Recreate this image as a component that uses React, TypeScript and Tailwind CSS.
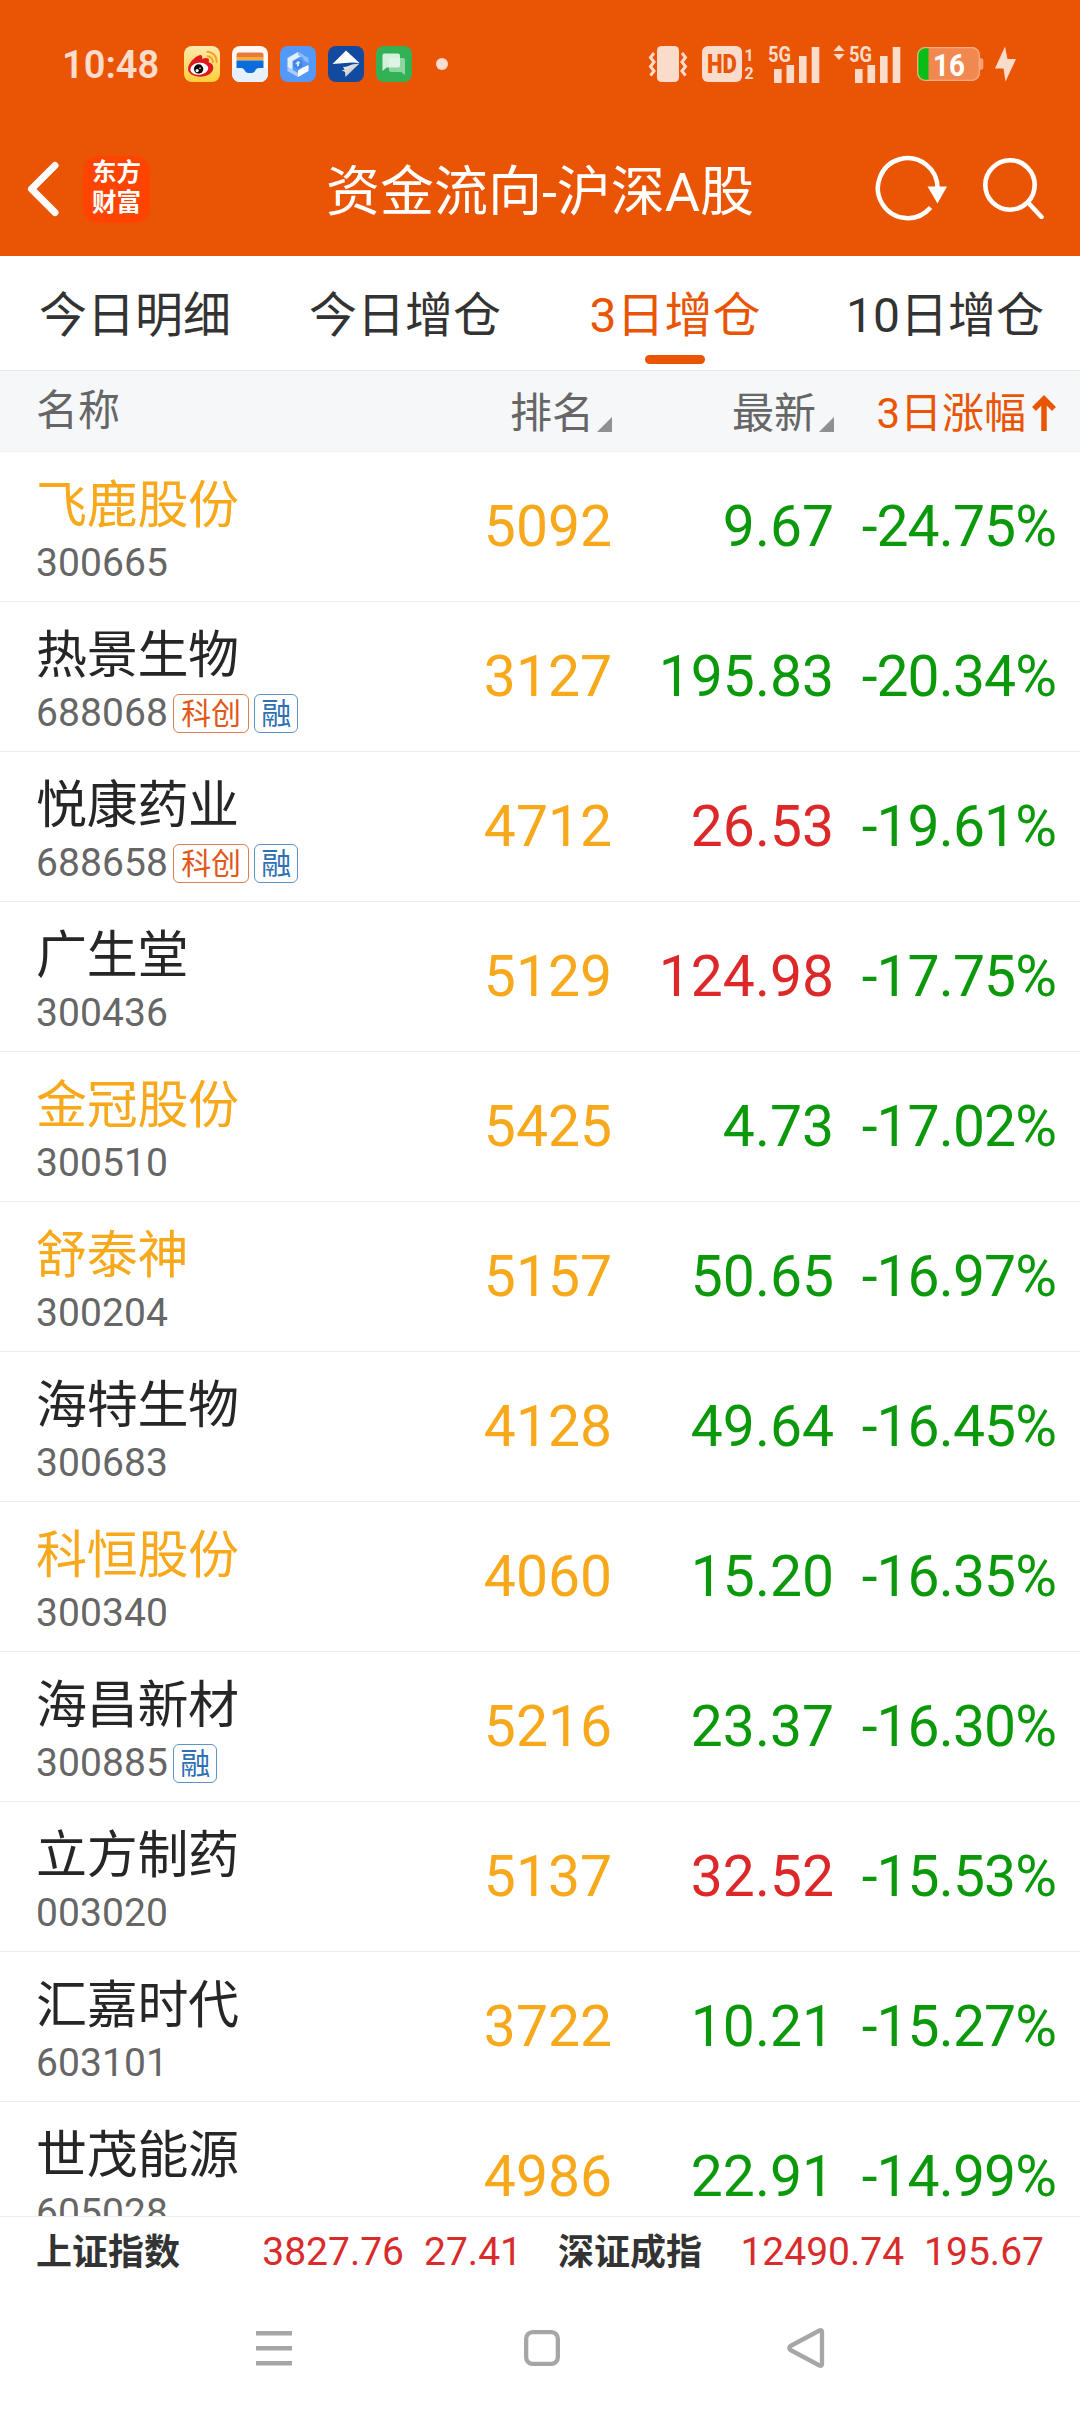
import type { ReactNode } from "react";

type Tag = "科创" | "融";

type Stock = {
  name: string;
  code: string;
  tags?: Tag[];
  held?: boolean;
  rank: string;
  price: string;
  up?: boolean;
  change: string;
};

const stocks: Stock[] = [
  { name: "飞鹿股份", code: "300665", held: true, rank: "5092", price: "9.67", change: "-24.75%" },
  { name: "热景生物", code: "688068", tags: ["科创", "融"], rank: "3127", price: "195.83", change: "-20.34%" },
  { name: "悦康药业", code: "688658", tags: ["科创", "融"], rank: "4712", price: "26.53", up: true, change: "-19.61%" },
  { name: "广生堂", code: "300436", rank: "5129", price: "124.98", up: true, change: "-17.75%" },
  { name: "金冠股份", code: "300510", held: true, rank: "5425", price: "4.73", change: "-17.02%" },
  { name: "舒泰神", code: "300204", held: true, rank: "5157", price: "50.65", change: "-16.97%" },
  { name: "海特生物", code: "300683", rank: "4128", price: "49.64", change: "-16.45%" },
  { name: "科恒股份", code: "300340", held: true, rank: "4060", price: "15.20", change: "-16.35%" },
  { name: "海昌新材", code: "300885", tags: ["融"], rank: "5216", price: "23.37", change: "-16.30%" },
  { name: "立方制药", code: "003020", rank: "5137", price: "32.52", up: true, change: "-15.53%" },
  { name: "汇嘉时代", code: "603101", rank: "3722", price: "10.21", change: "-15.27%" },
  { name: "世茂能源", code: "605028", rank: "4986", price: "22.91", change: "-14.99%" },
];

const tabs = ["今日明细", "今日增仓", "3日增仓", "10日增仓"];

function AppIcon({ children }: { children: ReactNode }) {
  return (
    <svg viewBox="0 0 36 36" className="h-9 w-9 shrink-0">
      {children}
    </svg>
  );
}

function NotificationIcons() {
  return (
    <div className="ml-[25px] flex items-center gap-3">
      <AppIcon>
        <defs>
          <linearGradient id="weibo" x1="0" y1="0" x2="0" y2="1">
            <stop offset="0" stopColor="#ffe9b0" />
            <stop offset="1" stopColor="#ffcf3a" />
          </linearGradient>
        </defs>
        <rect width="36" height="36" rx="8" fill="url(#weibo)" />
        <path
          d="M15.500 9.200c2-.6 3.300 1 2.700 3.800 3-1.700 7-1.500 6.800 1.200-.1 1-.5 1.700-.3 2.100 2.300.8 4.600 2.300 4.600 5.400 0 5.100-6 9-13 9S4 27.400 4 22.800C4 17.500 11 10.300 15.500 9.200z"
          fill="#e0191f"
        />
        <ellipse cx="15.300" cy="22.800" rx="9" ry="6" fill="#fff" transform="rotate(-6 15.300 22.800)" />
        <circle cx="14.600" cy="23" r="4.700" fill="#0b0b0b" />
        <circle cx="13.200" cy="24.600" r="1.600" fill="#fff" />
        <circle cx="16" cy="22.200" r=".8" fill="#fff" />
        <path d="M23.500 10.200a5.500 5.500 0 0 1 5.300 6M23.300 5.700a9.500 9.500 0 0 1 9.300 10.300" fill="none" stroke="#f3a320" strokeWidth="1.900" strokeLinecap="round" />
      </AppIcon>
      <AppIcon>
        <rect width="36" height="36" rx="8" fill="#fdf8f5" />
        <path d="M0 22h36v6a8 8 0 0 1-8 8H8a8 8 0 0 1-8-8z" fill="#e6f1fd" />
        <path d="M4.500 9a2.500 2.500 0 0 1 2.500-2.500h22A2.500 2.500 0 0 1 31.500 9v2.500h-27z" fill="#e9793f" />
        <path d="M4.500 11h27v3.500h-27z" fill="#f5ad36" />
        <path d="M4.500 14.500h27V22h-4.500c-2 0-3 1-3.700 2.400C22.300 26.300 21 27 18 27s-4.300-.7-5.300-2.600C12 23 11 22 9 22H4.500z" fill="#0d6cdc" />
      </AppIcon>
      <AppIcon>
        <rect width="36" height="36" rx="8" fill="#5499f8" />
        <path d="M18 6l5 3-10.500 6v9L7.500 21V12z" fill="#e4effe" />
        <path d="M7.500 21l10.500 6v4L7.500 25z" fill="#a9cdfd" />
        <path d="M18 27l10.500-6v4L18 31z" fill="#fff" />
        <path d="M23 21.500l5.500-2.500v3L18 28v-3.500z" fill="#fff" />
        <path d="M18 6l10.500 6v5l-5-3v-2L18 9z" fill="#8cbcfc" />
        <path d="M13.500 15.500L18 13l4.500 2.500v5L18 23l-4.500-2.500z" fill="#3f82e8" />
        <path d="M18 14.800l3 2.400h-2v2.600l-2 1v-2.600h-2z" fill="#d9e9fe" />
      </AppIcon>
      <AppIcon>
        <defs>
          <linearGradient id="blade" x1="0" y1="0" x2="1" y2="1">
            <stop offset="0" stopColor="#fff" />
            <stop offset="1" stopColor="#a6a9b2" />
          </linearGradient>
        </defs>
        <rect width="36" height="36" rx="8" fill="#114a9e" />
        <path d="M18 4.500L31.500 17 24 16.500 4.500 18z" fill="#fff" />
        <path d="M31.500 17.500L17.500 31l-.5-5-3.500-2h3.200L15 20.800c3 .4 5-.8 9-2.300z" fill="url(#blade)" />
      </AppIcon>
      <AppIcon>
        <rect width="36" height="36" rx="8" fill="#32b156" />
        <path d="M15 12h12a2 2 0 0 1 2 2v15l-4-3H15a2 2 0 0 1-2-2V14a2 2 0 0 1 2-2z" fill="#8dd6a0" />
        <path d="M8.500 7.500H22a2 2 0 0 1 2 2v10a2 2 0 0 1-2 2H10.500l-4 3.500V9.500a2 2 0 0 1 2-2z" fill="#eaf8ee" fillOpacity=".88" />
      </AppIcon>
    </div>
  );
}

function Signal() {
  return (
    <svg viewBox="0 0 53 38" className="h-[38px] w-[53px] overflow-visible" fill="#fbdccb" fontFamily="Roboto, sans-serif">
      <text x="0" y="17" fontSize="22" fontWeight="700" textLength="23" lengthAdjust="spacingAndGlyphs">
        5G
      </text>
      <path d="M6 24h7.600v14H6zM18.500 20h7.600v18h-7.600zM31 11h7.600v27H31zM43.700 2h7.600v36h-7.600z" />
    </svg>
  );
}

function StatusBar() {
  return (
    <div className="flex h-[128px] items-center pl-[62px] text-[#fbdccb]">
      <span className="pt-0.5 text-[38px] leading-none font-semibold">10:48</span>
      <NotificationIcons />
      <span className="ml-6 h-3 w-3 rounded-full bg-[#fbdccb]" />
      <svg viewBox="0 0 40 38" className="ml-[200px] h-[38px] w-10" fill="#fbdccb">
        <rect x="9" y="1" width="22" height="36" rx="4.500" />
        <path d="M6 8L2.500 12.500 6 17l-3.500 4.500L6 26l-3.500 4.500M34 8l3.500 4.500L34 17l3.500 4.500L34 26l3.500 4.500" fill="none" stroke="#fbdccb" strokeWidth="3" />
      </svg>
      <svg viewBox="0 0 54 38" className="ml-[14px] h-[38px] w-[54px]" fill="#fbdccb">
        <rect x="0" y="1" width="40" height="36" rx="6" />
        <text x="5" y="28" fontSize="25" fontWeight="900" fill="#e95504" textLength="30" lengthAdjust="spacingAndGlyphs">
          HD
        </text>
        <text x="42.500" y="16" fontSize="16" fontWeight="700">1</text>
        <text x="42.500" y="34" fontSize="16" fontWeight="700">2</text>
      </svg>
      <div className="ml-3">
        <Signal />
      </div>
      <svg viewBox="0 0 12 16" className="mb-[22px] ml-3 h-4 w-3" fill="#fbdccb">
        <path d="M6 0l5.500 6H.5zM6 15L.5 9h11z" />
      </svg>
      <div className="ml-1">
        <Signal />
      </div>
      <svg viewBox="0 0 67 36" className="ml-[15px] h-9 w-[67px]">
        <defs>
          <clipPath id="battery">
            <rect x="0" y="1" width="63" height="34" rx="8" />
          </clipPath>
        </defs>
        <rect x="0" y="1" width="63" height="34" rx="8" fill="#f18850" />
        <path d="M0 0h11.500v36H0z" fill="#08bd16" clipPath="url(#battery)" />
        <rect x=".7" y="1.700" width="61.600" height="32.600" rx="7.500" fill="none" stroke="#f6ad85" strokeWidth="1.300" />
        <path d="M63 12c2 0 3.300 1 3.300 2.500v7c0 1.500-1.300 2.500-3.300 2.500z" fill="#f5a277" />
        <text x="16" y="29.500" fontSize="31" fontWeight="700" fill="#fff" textLength="32" lengthAdjust="spacingAndGlyphs">
          16
        </text>
      </svg>
      <svg viewBox="0 0 21 36" className="ml-[11px] h-9 w-[21px]" fill="#fbdccb">
        <path d="M10 .5L0 22.500h8.500L10.500 35.500 21 13h-8.500z" />
      </svg>
    </div>
  );
}

function NavBar() {
  return (
    <div className="grid h-32 grid-cols-[1fr_auto_1fr] items-center">
      <div className="flex items-center pb-1.5">
        <svg viewBox="0 0 34 56" className="ml-[26px] h-14 w-[34px]">
          <path d="M29 4.500L5.500 28 29 51.500" fill="none" stroke="#fff" strokeWidth="7" strokeLinecap="round" strokeLinejoin="round" />
        </svg>
        <div className="ml-[23px] flex h-[67px] w-[67px] flex-col items-center justify-center gap-[5px] rounded-[15px] bg-[#ff4400] pb-1 text-[24.5px] leading-[25px] font-bold text-white">
          <span>东方</span>
          <span>财富</span>
        </div>
      </div>
      <h1 className="pt-0.5 text-[54px] leading-none text-white">资金流向-沪深A股</h1>
      <div className="flex items-center justify-end pr-[35px] pb-1.5">
        <svg viewBox="0 0 74 68" className="h-[68px] w-[74px]">
          <path d="M56.500 52.500A29.800 30 0 1 1 63.500 34" fill="none" stroke="#fff" strokeWidth="4.500" />
          <path d="M53.500 31.500h19.500L63.500 48.500z" fill="#fff" />
        </svg>
        <svg viewBox="0 0 64 64" className="mb-1 ml-[33px] h-16 w-16" fill="none" stroke="#fff" strokeWidth="4.600">
          <circle cx="29" cy="30" r="24.700" />
          <path d="M47.500 48L60.500 62" strokeLinecap="round" />
        </svg>
      </div>
    </div>
  );
}

function Tabs() {
  return (
    <div className="grid h-[115px] grid-cols-4 border-b border-[#e9e9e9] text-[48px] text-[#333]">
      {tabs.map((tab) => (
        <div key={tab} className="flex flex-col items-center">
          <span className={tab === "3日增仓" ? "mt-[29px] leading-[62px] text-[#e95504]" : "mt-[29px] leading-[62px]"}>
            {tab}
          </span>
          {tab === "3日增仓" ? <span className="mt-2 h-[9px] w-[60px] rounded-full bg-[#e95504]" /> : null}
        </div>
      ))}
    </div>
  );
}

function SortMark() {
  return (
    <svg viewBox="0 0 15 15" className="mb-[19px] ml-[3px] h-[15px] w-[15px] self-end">
      <path d="M15 0v15H0z" fill="#8f8f94" />
    </svg>
  );
}

function TableHead() {
  return (
    <div className="flex h-[81px] items-center border-b border-[#f1f2f4] bg-[#f6f7f9] text-[42px] leading-[60px] text-[#666]">
      <span className="w-[300px] pl-9">名称</span>
      <div className="flex h-full w-[312px] items-center justify-end">
        <span className="pt-1.5">排名</span>
        <SortMark />
      </div>
      <div className="flex h-full w-[222px] items-center justify-end">
        <span className="pt-1.5">最新</span>
        <SortMark />
      </div>
      <div className="flex flex-1 items-center justify-end pr-6 text-[#e95504]">
        <span className="pt-1.5">3日涨幅</span>
        <svg viewBox="0 0 24 36" className="mt-1 ml-[6px] h-9 w-6" fill="none" stroke="#e95504" strokeWidth="5.500">
          <path d="M12 36V4M2 14L12 4 22 14" />
        </svg>
      </div>
    </div>
  );
}

function TagBadge({ tag }: { tag: Tag }) {
  return (
    <span
      className={
        tag === "科创"
          ? "flex h-[39px] items-center rounded-md border border-[#dd8050] px-[7px] pt-px text-[30px] leading-none text-[#e0581a]"
          : "flex h-[39px] items-center rounded-md border border-[#5f92c5] px-[6px] pt-px text-[30px] leading-none text-[#2f6fb3]"
      }
    >
      {tag}
    </span>
  );
}

function StockRow({ stock }: { stock: Stock }) {
  return (
    <div className="flex h-[150px] shrink-0 items-center border-b border-[#ececec] text-[57px] leading-none">
      <div className="flex h-full w-[300px] flex-col pl-9">
        <span
          className={
            stock.held
              ? "mt-[23px] text-[51px] leading-[62px] tracking-[-0.3px] text-[#f7a81b]"
              : "mt-[23px] text-[51px] leading-[62px] tracking-[-0.3px] text-[#262626]"
          }
        >
          {stock.name}
        </span>
        <div className="mt-[5px] flex h-[42px] items-center gap-[5px]">
          <span className="text-[39px] leading-[42px] tracking-[0.1px] text-[#666]">{stock.code}</span>
          {stock.tags?.map((tag) => <TagBadge key={tag} tag={tag} />)}
        </div>
      </div>
      <span className="w-[312px] text-right text-[#f7a81b]">{stock.rank}</span>
      <span className={stock.up ? "w-[222px] text-right text-[#dc2828]" : "w-[222px] text-right text-[#0b990b]"}>
        {stock.price}
      </span>
      <span className="flex-1 pr-[24px] text-right tracking-[-0.9px] text-[#0b990b]">{stock.change}</span>
    </div>
  );
}

function IndexBar() {
  return (
    <div className="grid h-[68px] grid-cols-2 border-t border-[#ececec] text-[39px] leading-[70px] text-[#d92b2b]">
      <div className="flex justify-between pr-[18px] pl-9">
        <span className="pt-px text-[36px] font-bold text-[#333]">上证指数</span>
        <span className="flex gap-5">
          <span>3827.76</span>
          <span>27.41</span>
        </span>
      </div>
      <div className="flex justify-between pr-9 pl-[18px]">
        <span className="pt-px text-[36px] font-bold text-[#333]">深证成指</span>
        <span className="flex gap-5">
          <span>12490.74</span>
          <span>195.67</span>
        </span>
      </div>
    </div>
  );
}

function SystemNav() {
  return (
    <div className="flex flex-1 items-start pt-[42px]">
      <svg viewBox="0 0 40 44" className="ml-[254px] h-11 w-10" fill="#a6a6a6">
        <path d="M2 5h36v4.500H2zM2 20h36v4.500H2zM2 35h36v4.500H2z" />
      </svg>
      <svg viewBox="0 0 40 44" className="ml-[228px] h-11 w-10" fill="none" stroke="#a6a6a6" strokeWidth="4.300">
        <rect x="4.150" y="6.150" width="31.700" height="31.700" rx="6.500" />
      </svg>
      <svg viewBox="0 0 40 44" className="ml-[224px] h-11 w-10" fill="none" stroke="#a6a6a6" strokeWidth="4.300" strokeLinejoin="round">
        <path d="M33.500 4.500Q36 3.500 36 6V38Q36 40.500 33.500 39.500L4.500 24Q2 22 4.500 20z" />
      </svg>
    </div>
  );
}

export default function App() {
  return (
    <div className="flex h-[2414px] w-[1080px] flex-col overflow-hidden bg-white font-[Roboto,'Noto_Sans_CJK_SC',sans-serif]">
      <header className="h-[256px] bg-[#e95504]">
        <StatusBar />
        <NavBar />
      </header>
      <Tabs />
      <TableHead />
      <main className="flex h-[1764px] flex-col overflow-hidden">
        {stocks.map((stock) => (
          <StockRow key={stock.code} stock={stock} />
        ))}
      </main>
      <IndexBar />
      <SystemNav />
    </div>
  );
}
